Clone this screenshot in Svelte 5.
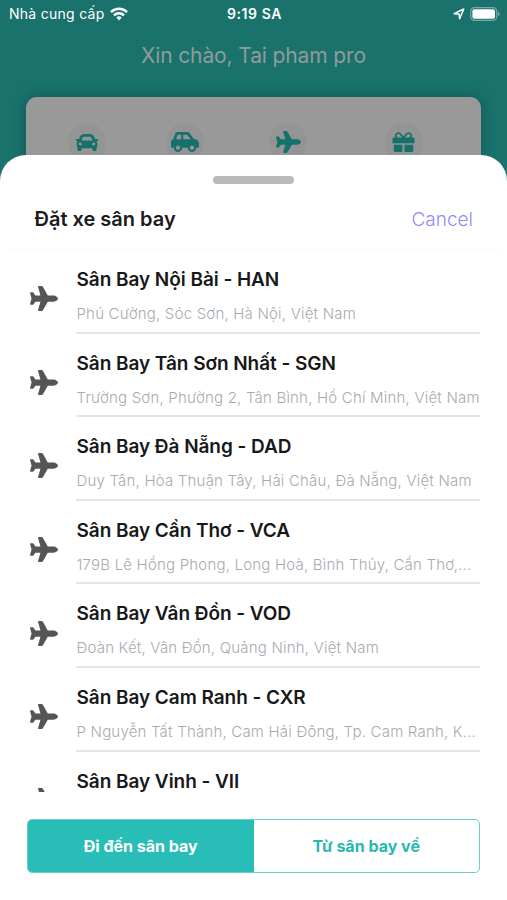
<script>
	const airports = [
		{ name: 'Sân Bay Nội Bài - HAN', address: 'Phú Cường, Sóc Sơn, Hà Nội, Việt Nam' },
		{ name: 'Sân Bay Tân Sơn Nhất - SGN', address: 'Trường Sơn, Phường 2, Tân Bình, Hồ Chí Minh, Việt Nam' },
		{ name: 'Sân Bay Đà Nẵng - DAD', address: 'Duy Tân, Hòa Thuận Tây, Hải Châu, Đà Nẵng, Việt Nam' },
		{ name: 'Sân Bay Cần Thơ - VCA', address: '179B Lê Hồng Phong, Long Hoà, Bình Thủy, Cần Thơ,...' },
		{ name: 'Sân Bay Vân Đồn - VOD', address: 'Đoàn Kết, Vân Đồn, Quảng Ninh, Việt Nam' },
		{ name: 'Sân Bay Cam Ranh - CXR', address: 'P Nguyễn Tất Thành, Cam Hải Đông, Tp. Cam Ranh, K...' },
		{ name: 'Sân Bay Vinh - VII', address: '' }
	];

	let direction = $state('to');
	let open = $state(true);
</script>

{#snippet Plane()}
	<svg class="plane" viewBox="0 0 576 512" preserveAspectRatio="none">
		<path d="M482.3 192c34.2 0 93.7 29 93.7 64c0 36-59.5 64-93.7 64l-116.6 0L265.2 495.9c-5.7 10-16.3 16.1-27.8 16.1l-56.2 0c-10.6 0-18.3-10.2-15.4-20.4l49-171.6L112 320 68.8 377.6c-3 4-7.8 6.4-12.8 6.4l-42 0c-7.8 0-14-6.3-14-14c0-1.3 .2-2.6 .5-3.9L32 256 .5 145.9c-.4-1.3-.5-2.6-.5-3.9c0-7.8 6.3-14 14-14l42 0c5 0 9.8 2.4 12.8 6.4L112 192l102.9 0-49-171.6C162.9 10.2 170.6 0 181.2 0l56.2 0c11.5 0 22.1 6.2 27.8 16.1L365.7 192l116.6 0z" />
	</svg>
{/snippet}

<div class="app">
	<div class="status">
		<div class="carrier">
			<span>Nhà cung cấp</span>
			<svg width="18" height="14" viewBox="0 0 18 14" fill="none" stroke="#fff" stroke-width="2.5">
				<path d="M1 5.1a11.4 11.4 0 0 1 16 0" />
				<path d="M4 8.3a7.1 7.1 0 0 1 10 0" />
				<path d="M6.4 10.6a3.7 3.7 0 0 1 5.2 0L9 13.4z" fill="#fff" stroke="none" />
			</svg>
		</div>
		<span class="clock">9:19 SA</span>
		<div class="indicators">
			<svg width="12" height="12" viewBox="0 0 12 12" fill="none" stroke="#fff" stroke-width="1.5" stroke-linejoin="round">
				<path d="M1.1 5.7L10.8 1 6.6 10.8 6.1 6.1z" />
			</svg>
			<svg width="30" height="14" viewBox="0 0 30 14">
				<rect x="0.7" y="0.7" width="26" height="12.6" rx="3.6" fill="none" stroke="#79aaa6" stroke-width="1.2" />
				<rect x="2.4" y="2.3" width="22.6" height="9.4" rx="2" fill="#fff" />
				<path d="M28 4.8q1.7 .6 1.7 2.2T28 9.2z" fill="#79aaa6" />
			</svg>
		</div>
	</div>

	<h1>Xin chào, Tai pham pro</h1>

	<div class="services">
		<div class="service">
			<svg width="22" height="17" viewBox="0 64 512 384" preserveAspectRatio="none">
				<path d="M499.99 176h-59.87l-16.64-41.6C406.38 91.63 365.57 64 319.5 64h-127c-46.06 0-86.88 27.63-103.99 70.4L71.87 176H12.01C4.2 176-1.53 183.34.37 190.91l6 24C7.7 220.25 12.5 224 18.01 224h20.07C24.65 235.73 16 252.78 16 272v48c0 16.12 6.16 30.67 16 41.93V416c0 17.67 14.33 32 32 32h32c17.67 0 32-14.33 32-32v-32h256v32c0 17.67 14.33 32 32 32h32c17.67 0 32-14.33 32-32v-54.07c9.84-11.25 16-25.8 16-41.93v-48c0-19.22-8.65-36.27-22.07-48H494c5.51 0 10.31-3.75 11.64-9.09l6-24c1.89-7.57-3.84-14.91-11.65-14.91zm-352.06-17.83c7.29-18.22 24.94-30.17 44.57-30.17h127c19.63 0 37.28 11.95 44.57 30.17L384 208H128l19.93-49.83zM96 319.8c-19.2 0-32-12.76-32-31.9S76.8 256 96 256s48 28.71 48 47.85-28.8 15.95-48 15.95zm320 0c-19.2 0-48 3.19-48-15.95S396.8 256 416 256s32 12.76 32 31.9-12.8 31.9-32 31.9z" />
			</svg>
		</div>
		<div class="service">
			<svg width="28" height="20" viewBox="0 32 640 448" preserveAspectRatio="none">
				<path d="M544 192h-16L419.22 56.02A64.025 64.025 0 0 0 369.24 32H155.33c-26.17 0-49.7 15.93-59.42 40.23L48 194.26C20.44 201.4 0 226.21 0 256v112c0 8.84 7.16 16 16 16h48c0 53.02 42.98 96 96 96s96-42.98 96-96h128c0 53.02 42.98 96 96 96s96-42.98 96-96h48c8.84 0 16-7.16 16-16v-80c0-53.02-42.98-96-96-96zM160 432c-26.47 0-48-21.53-48-48s21.53-48 48-48 48 21.53 48 48-21.53 48-48 48zm72-240H116.93l38.4-96H232v96zm48 0V96h89.24l76.8 96H280zm200 240c-26.47 0-48-21.53-48-48s21.53-48 48-48 48 21.53 48 48-21.53 48-48 48z" />
			</svg>
		</div>
		<div class="service">{@render Plane()}</div>
		<div class="service">
			<svg width="23" height="20" viewBox="0 0 23 20">
				<path d="M1.8 5.5h19.4q1.3 0 1.3 1.3v4.4H.5V6.8q0-1.3 1.3-1.3zM1.8 12.7h8.6V20H3.1q-1.3 0-1.3-1.3zM12.5 12.7h8.7v6q0 1.3-1.3 1.3h-7.4z" />
				<path d="M11.5 6.3C9.5 3.1 8.4 1.1 6.7 1.1a2.5 2.5 0 0 0-1.3 4.8M11.5 6.3c2-3.2 3.1-5.2 4.8-5.2a2.5 2.5 0 0 1 1.3 4.8" fill="none" stroke="#17716b" stroke-width="1.8" />
			</svg>
		</div>
	</div>

	{#if open}
		<section class="sheet">
			<div class="handle"></div>
			<header>
				<h2>Đặt xe sân bay</h2>
				<button class="cancel" onclick={() => (open = false)}>Cancel</button>
			</header>

			<ul>
				{#each airports as airport}
					<li>
						{@render Plane()}
						<div class="info">
							<div class="name">{airport.name}</div>
							<div class="address">{airport.address}</div>
						</div>
					</li>
				{/each}
			</ul>

			<div class="tabs">
				<button class:active={direction === 'to'} onclick={() => (direction = 'to')}>Đi đến sân bay</button>
				<button class:active={direction === 'from'} onclick={() => (direction = 'from')}>Từ sân bay về</button>
			</div>
		</section>
	{/if}
</div>

<style>
	:global(body) {
		margin: 0;
	}

	.app {
		position: relative;
		height: 900px;
		overflow: hidden;
		background: #1a726c;
		font-family: Inter, 'Liberation Sans', sans-serif;
	}

	.status {
		display: grid;
		grid-template-columns: 1fr auto 1fr;
		align-items: center;
		height: 27px;
		padding: 0 7px 0 9px;
		color: #fff;
		font-size: 14px;
		line-height: 27px;
	}

	.carrier,
	.indicators {
		display: flex;
		align-items: center;
		gap: 5px;
	}

	.carrier {
		letter-spacing: 0.27px;
	}

	.indicators {
		justify-content: flex-end;
	}

	.clock {
		font-weight: 600;
		letter-spacing: 0.6px;
	}

	h1 {
		margin: 14px 0 0;
		text-align: center;
		color: #919b9b;
		font-size: 21px;
		font-weight: 400;
		letter-spacing: -0.12px;
		line-height: 30px;
	}

	.services {
		display: grid;
		grid-template-columns: 98px 98px 108px 123px;
		justify-items: center;
		box-sizing: border-box;
		height: 150px;
		margin: 26px 26px 0;
		padding: 26px 0 0 12px;
		border-radius: 11px;
		background: #999;
		box-shadow: 0 0 14px rgba(0, 40, 35, 0.35);
	}

	.service {
		display: flex;
		align-items: center;
		justify-content: center;
		width: 38px;
		height: 38px;
		border-radius: 50%;
		background: #949494;
		fill: #17716b;
	}

	.service .plane {
		width: 25px;
		height: 22px;
	}

	.sheet {
		position: absolute;
		inset: 155px 0 0;
		display: flex;
		flex-direction: column;
		border-radius: 26px 26px 0 0;
		background: #fff;
	}

	.handle {
		width: 81px;
		height: 8px;
		margin: 21px auto 0;
		border-radius: 4px;
		background: #bababa;
	}

	header {
		display: flex;
		align-items: center;
		justify-content: space-between;
		height: 65px;
		margin: 0 5px;
		padding: 0 29px;
		border-bottom: 1px solid #fafafa;
	}

	h2 {
		margin: 5px 0 0 0.5px;
		color: #1b1b1b;
		font-size: 20px;
		font-weight: 600;
	}

	button {
		padding: 0;
		border: 0;
		background: none;
		font-family: inherit;
		cursor: pointer;
	}

	.cancel {
		margin-top: 5px;
		color: #8f8cf2;
		font-size: 19px;
		font-weight: 300;
	}

	ul {
		height: 542px;
		margin: 0;
		padding: 0;
		overflow: hidden;
		list-style: none;
	}

	li {
		display: flex;
		align-items: center;
		height: 83.6px;
		padding: 0 27px 0 30px;
	}

	li .plane {
		flex-shrink: 0;
		width: 28px;
		height: 25px;
		margin: 14px 18px 0 0;
		fill: #555;
	}

	.info {
		flex: 1;
		box-sizing: border-box;
		height: 100%;
		padding: 15px 0 0 0.5px;
		border-bottom: 2px solid #e5e5e5;
		white-space: nowrap;
	}

	.name {
		color: #181818;
		font-size: 19px;
		font-weight: 600;
		letter-spacing: -0.05px;
		line-height: 30px;
	}

	.address {
		margin-top: 6px;
		color: #a6abb0;
		font-size: 15px;
		font-weight: 300;
		letter-spacing: 0.2px;
		line-height: 26px;
	}

	.tabs {
		display: flex;
		box-sizing: border-box;
		height: 54px;
		margin: 27px 27px 0;
		border: 1px solid #6acfc9;
		border-radius: 5px;
		overflow: hidden;
	}

	.tabs button {
		flex: 1;
		color: #2bb8b0;
		font-size: 16px;
		font-weight: 700;
	}

	.tabs .active {
		background: #28bdb6;
		color: #fff;
	}
</style>
